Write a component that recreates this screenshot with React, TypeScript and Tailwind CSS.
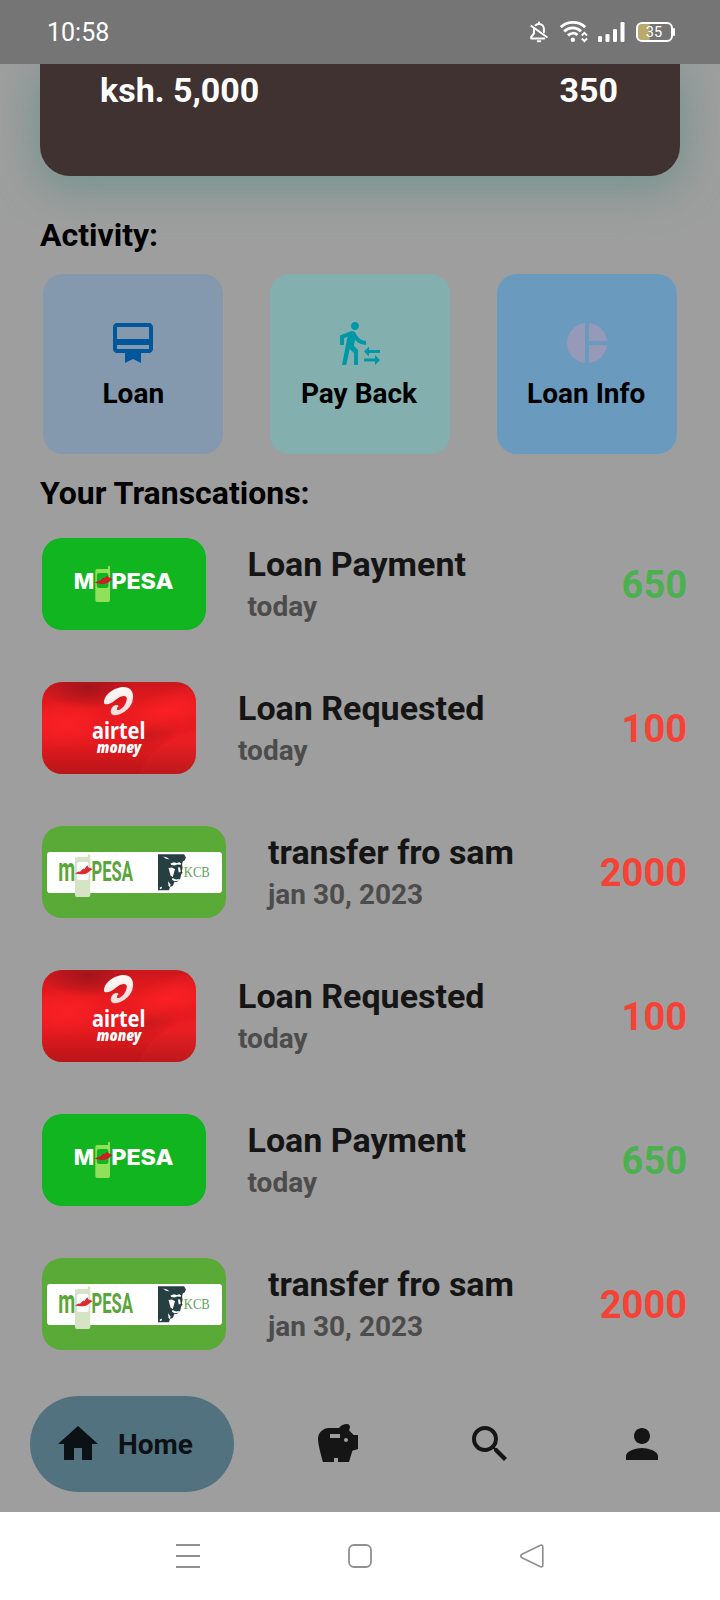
import React from "react";
import {
  MdCardMembership,
  MdTransferWithinAStation,
  MdPieChart,
  MdHome,
  MdSavings,
  MdSearch,
  MdPerson,
} from "react-icons/md";

function StatusBar() {
  return (
    <header className="relative z-10 flex h-16 items-center justify-between bg-[#757575] pl-[47px] pr-[45px] text-white">
      <span className="text-[25px] leading-none">10:58</span>
      <div className="flex items-center">
        <svg width="18" height="22" viewBox="0 0 18 22" fill="none" stroke="white" strokeWidth="2" strokeLinecap="round" strokeLinejoin="round">
          <path d="M5.500 4.200C6.600 3.300 7.800 3 9 3c3 0 4.900 2.200 4.900 5v3.200M9 1.500V3M3.900 8v4.500L1.200 15.800V17.400h13" />
          <path d="M1.400 5 16.800 16" />
          <path d="M7.800 20.300h2.400" />
        </svg>
        <svg className="ml-[12px]" width="28" height="22" viewBox="0 0 28 22" fill="none" stroke="white" strokeWidth="2.900">
          <path d="M.8 6.200C7.600-.2 18.400-.2 25.200 6.200M4.200 10.400c4.800-4.600 12-4.600 16.800-.2M8 14.400c3-2.700 6.800-2.700 9.400-.4" />
          <circle cx="12.800" cy="18.800" r="2.200" fill="white" stroke="none" />
          <path d="m21.800 14.500 2.600-2.600 2.600 2.600M21.800 17.500l2.600 2.600 2.600-2.600" strokeWidth="1.900" />
        </svg>
        <svg className="ml-[10px]" width="27" height="20" viewBox="0 0 27 20" fill="white">
          <rect x="0" y="14" width="4" height="6" rx="1.200" />
          <rect x="7.500" y="12" width="4" height="8" rx="1.200" />
          <rect x="15" y="7" width="4" height="13" rx="1.200" />
          <rect x="22.500" y="0" width="4" height="20" rx="1.200" />
        </svg>
        <svg className="ml-[11px]" width="39" height="20" viewBox="0 0 39 20">
          <path d="M6 2h7.700v16H6a4 4 0 0 1-4-4V6a4 4 0 0 1 4-4z" fill="#b9aa6b" />
          <rect x="1" y="1" width="35" height="18" rx="5" fill="none" stroke="white" strokeWidth="2" />
          <rect x="37" y="6" width="2" height="8" rx="1" fill="white" />
          <text x="18" y="15.200" fontSize="14.500" fill="white" textAnchor="middle">35</text>
        </svg>
      </div>
    </header>
  );
}

function MpesaLogo() {
  return (
    <svg width="163.500" height="92" viewBox="0 0 163.500 92" className="rounded-[20px] bg-[#10b520]">
      <g fill="white" fontFamily="Inter" fontWeight="800" fontSize="21.800">
        <text x="31.800" y="50.600" textLength="20.500" lengthAdjust="spacingAndGlyphs">M</text>
        <text x="69.200" y="50.600" textLength="62.300" lengthAdjust="spacingAndGlyphs">PESA</text>
      </g>
      <path d="M55.500 31H66v-3h2v34a2 2 0 0 1-2 2H55.300a2 2 0 0 1-2-2V33a2 2 0 0 1 2.200-2z" fill="#8fe05a" />
      <rect x="54.900" y="35" width="11.500" height="15" rx="2" fill="#10b520" />
      <path d="M53 44.400l4-2 1 .4 3.500-3 .8.700 2.700-2.800 2 1.800 3.600 1.500c-2.600 1.600-3.600 3.400-6 4.300-3 .9-8 .8-11.600-.5z" fill="#d01a26" />
    </svg>
  );
}

function AirtelLogo() {
  return (
    <svg width="154" height="92" viewBox="0 0 154 92" className="rounded-[20px]">
      <defs>
        <linearGradient id="airtelBase" x1="0" y1="0" x2="0" y2="1">
          <stop offset="0" stopColor="#cc171c" />
          <stop offset="0.300" stopColor="#ea1b1f" />
          <stop offset="0.650" stopColor="#e61b1f" />
          <stop offset="1" stopColor="#b81519" />
        </linearGradient>
        <radialGradient id="airtelShade">
          <stop offset="0" stopColor="#94131a" stopOpacity="0.750" />
          <stop offset="1" stopColor="#94131a" stopOpacity="0" />
        </radialGradient>
        <radialGradient id="airtelLight">
          <stop offset="0" stopColor="#fa2024" />
          <stop offset="1" stopColor="#fa2024" stopOpacity="0" />
        </radialGradient>
        <linearGradient id="airtelSwirl" x1="0" y1="0" x2="0.300" y2="1">
          <stop offset="0" stopColor="#ffffff" />
          <stop offset="1" stopColor="#f6dcda" />
        </linearGradient>
      </defs>
      <rect width="154" height="92" fill="url(#airtelBase)" />
      <ellipse cx="46" cy="6" rx="48" ry="22" fill="url(#airtelShade)" />
      <ellipse cx="108" cy="52" rx="38" ry="16" transform="rotate(-25 108 52)" fill="url(#airtelShade)" opacity="0.500" />
      <ellipse cx="128" cy="28" rx="48" ry="22" transform="rotate(-20 128 28)" fill="url(#airtelLight)" />
      <ellipse cx="24" cy="42" rx="44" ry="24" fill="url(#airtelLight)" />
      <path d="M97 92c8-22 26-36 57-44v44z" fill="#ff4a4a" opacity="0.080" />
      <path d="M62 20.500C62.300 11.500 73.500 5 82 5c8.700.2 10.400 8 8.300 15-2.600 7.800-11.300 13.200-17.500 13.200-5 0-5-6-1.800-8.700 1.800-1.600 5-2.200 5.600-.3-2 1.400-2.400 4.200 0 3.900 4.500-1.200 8.500-7.600 8.200-11.600-.4-3.400-4.800-2.900-8.500-.6-3.600 2.300-6.500 5.500-10 6.200-2.400.5-4.300.2-4.300-1.600z" fill="url(#airtelSwirl)" />
      <g fill="white">
        <text x="50" y="57.300" fontFamily="Noto Sans" fontWeight="700" fontSize="23" textLength="53.500" lengthAdjust="spacingAndGlyphs">airtel</text>
        <text x="54.800" y="70.500" fontFamily="Noto Sans" fontWeight="900" fontStyle="italic" fontSize="15" textLength="44.500" lengthAdjust="spacingAndGlyphs">money</text>
      </g>
    </svg>
  );
}

function KcbLogo() {
  return (
    <svg width="184" height="92" viewBox="0 0 184 92" className="rounded-[20px] bg-[#5aaa38]">
      <rect x="5" y="26" width="175" height="41" rx="3" fill="white" />
      <g fill="#5aa53c" fontFamily="Roboto" fontWeight="700">
        <text x="16.300" y="55" fontSize="34" textLength="17" lengthAdjust="spacingAndGlyphs">m</text>
        <text x="49.500" y="55" fontSize="27" textLength="41.500" lengthAdjust="spacingAndGlyphs">PESA</text>
      </g>
      <path d="M35 31h11v-2.500h2.300v40.500a2 2 0 0 1-2 2H35a2 2 0 0 1-2-2V33a2 2 0 0 1 2-2z" fill="#d6e4c6" />
      <rect x="35" y="36" width="11.500" height="18" rx="2.500" fill="white" />
      <path d="M33 47.600l3.500-2.200 1.500.3 3.300-3.200 1 .7 3-4 1.200 2.400 4.300 1.500c-3 1.400-4 3.800-7 4.700-3.500.9-7.500.6-10.800-.2z" fill="#e02a33" />
      <path d="M116 28.300h26l1.900 3-.9 2.700-2.300 1.600-.6 3 .5 3.400-.8 3 .8 1.500-1.500 2-.8 4-2.500 3-3.500.8-1.500 3.700-2.500.8-1.500 3.500h-10.800z" fill="#263f42" />
      <g fill="white">
        <path d="M128.500 37.500l3.500-1.200 2.500.8 3-.8 2 1.700-1.200.8-3-.3-3 1-3-.4z" />
        <path d="M126.500 42l3.500-.6 3 1.800-1 3.300-1.200 4.500-2.300-1.500-1-4z" />
        <path d="M136 41.500l2-.3.700 4.600-2 .6z" />
        <path d="M130.500 52l3.500 1.500 3.500-.5-.8 1.700-4.200.5-2.500-1.500z" />
        <path d="M126 55l2.500 3.500-.5 3-1.500-2z" />
        <path d="M121 30.500l4 .9 2.500 2-3.500-.6z" />
        <path d="M117.500 62l2-1.500.5 1.500-1.500 1.200z" />
      </g>
      <text x="141.800" y="51.400" fontFamily="Liberation Serif" fontSize="14" fill="#5f9f58" textLength="26" lengthAdjust="spacingAndGlyphs">KCB</text>
    </svg>
  );
}

const logos = { mpesa: MpesaLogo, airtel: AirtelLogo, kcb: KcbLogo };

type Transaction = {
  logo: keyof typeof logos;
  title: string;
  date: string;
  amount: string;
  incoming: boolean;
};

const payment: Transaction = { logo: "mpesa", title: "Loan Payment", date: "today", amount: "650", incoming: true };
const request: Transaction = { logo: "airtel", title: "Loan Requested", date: "today", amount: "100", incoming: false };
const transfer: Transaction = { logo: "kcb", title: "transfer fro sam", date: "jan 30, 2023", amount: "2000", incoming: false };
const transactions = [payment, request, transfer, request, payment, transfer];

function TransactionRow({ logo, title, date, amount, incoming }: Transaction) {
  const Logo = logos[logo];
  return (
    <li className="flex h-[92px] items-center">
      <Logo />
      <div className="ml-[42px] flex flex-col pt-[3px]">
        <span className="text-[34px] leading-10 font-bold text-[#151515]">{title}</span>
        <span className="mt-[3px] text-[28px] leading-10 font-bold text-[#4c4c4c]">{date}</span>
      </div>
      <span className={`ml-auto pt-px text-[38px] leading-none font-bold ${incoming ? "text-[#4caf50]" : "text-[#f44336]"}`}>{amount}</span>
    </li>
  );
}

export default function App() {
  return (
    <div className="flex h-[1600px] w-[720px] flex-col overflow-hidden bg-[#9e9e9e] font-[Roboto,sans-serif] text-black">
      <StatusBar />
      <section className="mx-10 flex h-28 justify-between rounded-b-[30px] bg-[#403230] pt-[6px] pr-[62px] pl-[60px] text-[34px] leading-10 font-bold text-white shadow-[0_10px_40px_6px_#78948f]">
        <span>ksh. 5,000</span>
        <span>350</span>
      </section>
      <h2 className="mt-[39px] ml-10 text-[32px] leading-10 font-bold">Activity:</h2>
      <div className="mt-[19px] flex justify-between px-[43.300px]">
        <button className="flex size-[180px] flex-col items-center rounded-[20px] bg-[#8499ad] pt-[45px]">
          <MdCardMembership size={48} color="#01579b" />
          <span className="mt-[7px] text-[28px] leading-10 font-bold">Loan</span>
        </button>
        <button className="flex size-[180px] flex-col items-center rounded-[20px] bg-[#84afaf] pt-[45px]">
          <MdTransferWithinAStation size={48} color="#0097a7" />
          <span className="mt-[7px] pr-[2px] text-[28px] leading-10 font-bold">Pay Back</span>
        </button>
        <button className="flex size-[180px] flex-col items-center rounded-[20px] bg-[#6b9abf] pt-[45px]">
          <MdPieChart size={48} color="#9799b8" />
          <span className="mt-[7px] pr-px text-[28px] leading-10 font-bold">Loan Info</span>
        </button>
      </div>
      <h2 className="mt-[19px] ml-10 text-[32px] leading-10 font-bold">Your Transcations:</h2>
      <ul className="mt-[25px] mr-[33px] ml-[42px] flex flex-col gap-[52px]">
        {transactions.map((transaction, index) => (
          <TransactionRow key={index} {...transaction} />
        ))}
      </ul>
      <nav className="mt-[46px] ml-[30px] flex h-24 items-center text-[#151515]">
        <div className="flex h-24 w-[204px] items-center rounded-full bg-[#52727f] pl-6 text-[#0b1114]">
          <MdHome size={48} />
          <span className="ml-4 pt-[2px] text-[28px] font-bold">Home</span>
        </div>
        <MdSavings size={48} className="ml-20" />
        <MdSearch size={48} className="ml-[104px]" />
        <MdPerson size={48} className="ml-[104px]" />
      </nav>
      <footer className="mt-5 flex h-[88px] items-center bg-white text-[#909090]">
        <svg className="ml-44" width="24" height="24" viewBox="0 0 24 24" stroke="currentColor" strokeWidth="2">
          <path d="M0 1h24M0 12h24M0 23h24" />
        </svg>
        <svg className="ml-[148px]" width="24" height="24" viewBox="0 0 24 24" fill="none" stroke="currentColor" strokeWidth="1.800">
          <rect x="1" y="1" width="22" height="22" rx="5" />
        </svg>
        <svg className="ml-[148px]" width="24" height="24" viewBox="0 0 24 24" fill="none" stroke="currentColor" strokeWidth="1.700">
          <path d="M20.500 1.200 2 10.300q-2.400 1.700 0 3.400l18.500 9.100q2.300.6 2.300-1.800V3q0-2.400-2.300-1.800z" />
        </svg>
      </footer>
    </div>
  );
}
